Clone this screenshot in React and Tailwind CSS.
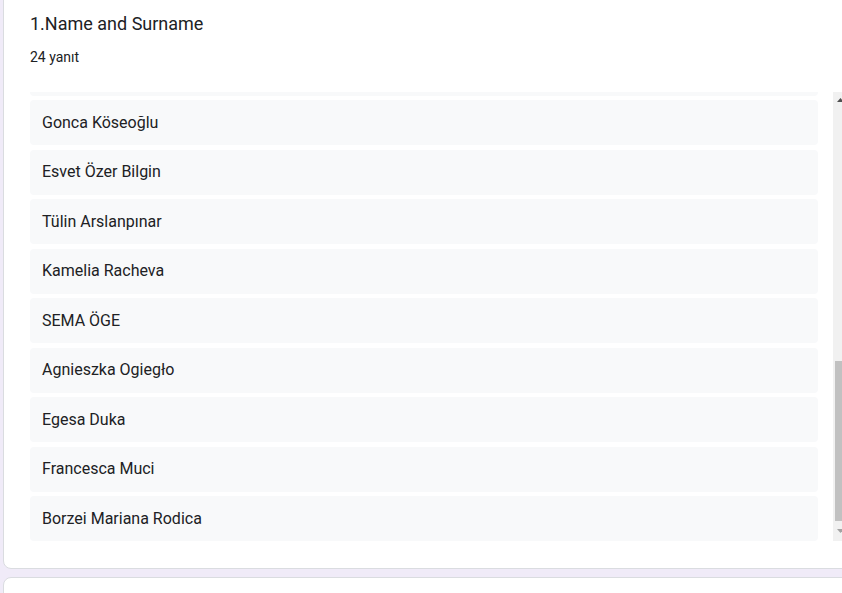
const names = [
  'Gonca Köseoğlu',
  'Esvet Özer Bilgin',
  'Tülin Arslanpınar',
  'Kamelia Racheva',
  'SEMA ÖGE',
  'Agnieszka Ogiegło',
  'Egesa Duka',
  'Francesca Muci',
  'Borzei Mariana Rodica',
];

const font = { fontFamily: 'Roboto, "Liberation Sans", Arial, sans-serif' };

function FakeScrollbar() {
  return (
    <div className="ml-[15px] w-[15px] shrink-0 h-full bg-[#f1f1f1] flex flex-col items-center">
      <div className="h-[16px] flex items-center justify-center">
        <svg width="7" height="4" viewBox="0 0 7 4">
          <polygon points="0,4 3.5,0 7,4" fill="#505050" />
        </svg>
      </div>
      <div className="flex-1" />
      <div className="w-[11px] h-[160px] bg-[#c1c1c1]" />
      <div className="h-[20px] flex items-center justify-center">
        <svg width="7" height="4" viewBox="0 0 7 4">
          <polygon points="0,0 7,0 3.5,4" fill="#a3a3a3" />
        </svg>
      </div>
    </div>
  );
}

export default function App() {
  return (
    <div className="w-[842px] h-[593px] overflow-hidden bg-[#f0ebf8] pl-[3px]" style={font}>
      <div className="w-[880px] mt-[-10px] bg-white border border-[#dadce0] rounded-lg pl-[26px] pt-[21px] pb-[27px]">
        <h2 className="text-[18px] leading-[24px] text-[#202124]">1.Name and Surname</h2>
        <p className="mt-[11px] text-[14px] leading-[20px] text-[#202124]">24 yanıt</p>

        <div className="mt-[25px] flex h-[449px]">
          <div className="w-[788px] shrink-0 overflow-hidden">
            <div className="flex flex-col gap-[4.5px] mt-[-41.5px]">
              <div className="h-[45px] bg-[#f8f9fa] rounded" />
              {names.map((n) => (
                <div
                  key={n}
                  className="h-[45px] bg-[#f8f9fa] rounded px-[12px] flex items-center text-[16px] text-[#202124]"
                >
                  {n}
                </div>
              ))}
            </div>
          </div>
          <FakeScrollbar />
        </div>
      </div>

      <div className="w-[880px] mt-[8px] h-[40px] bg-white border border-[#dadce0] rounded-lg" />
    </div>
  );
}
